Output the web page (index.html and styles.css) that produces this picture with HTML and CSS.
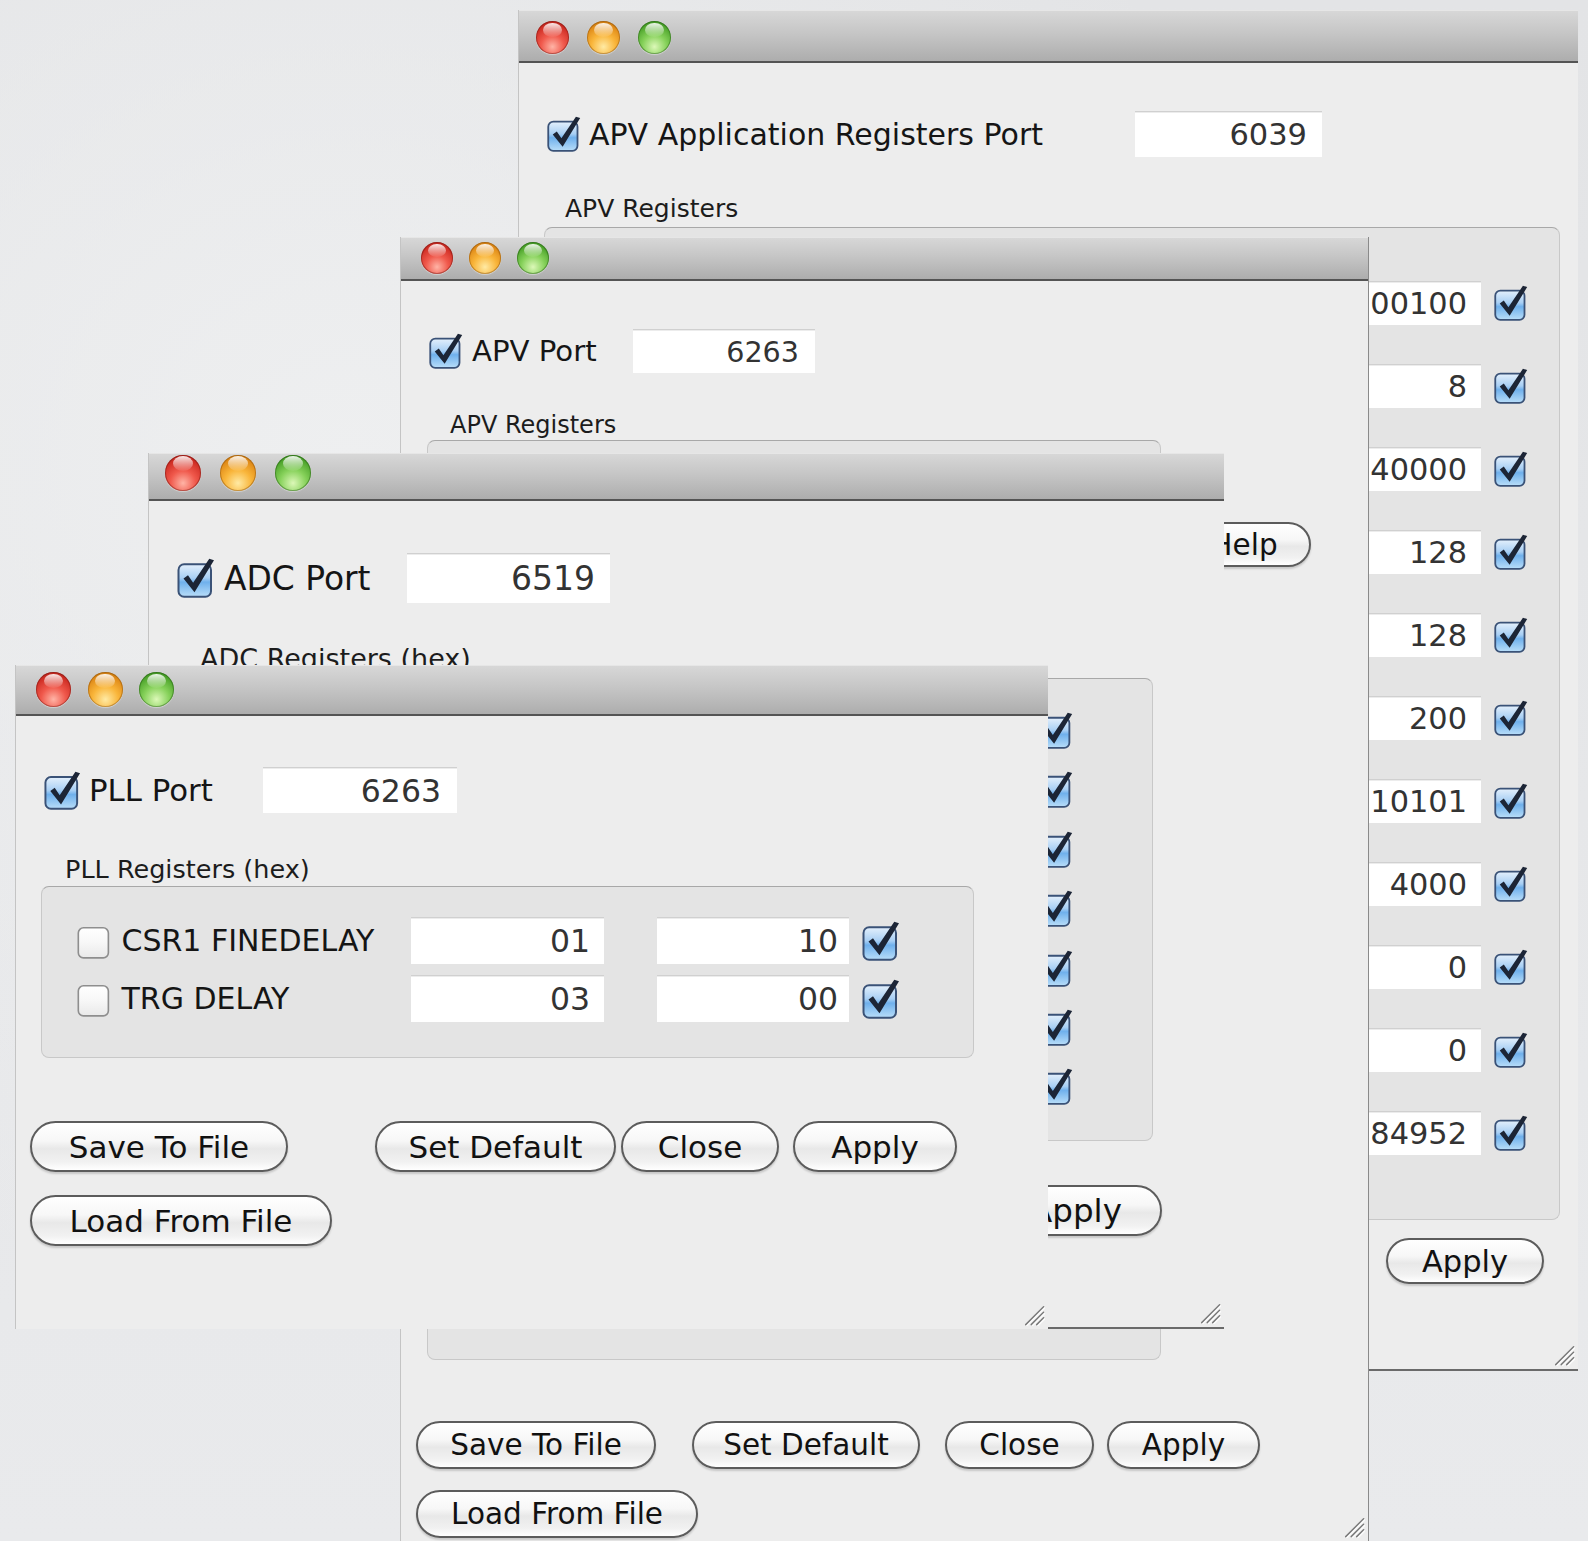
FILE: index.html
```html
<!DOCTYPE html>
<html lang="en">
<head>
<meta charset="utf-8">
<title>APV Slow Control</title>
<link rel="stylesheet" href="styles.css">
</head>
<body>
<svg class="defs" aria-hidden="true">
  <defs>
    <linearGradient id="cbFill" x1="0" y1="0" x2="0" y2="1">
      <stop offset="0" stop-color="#e4f0fc"/>
      <stop offset="0.42" stop-color="#a8cff4"/>
      <stop offset="0.55" stop-color="#6fb0ec"/>
      <stop offset="1" stop-color="#b9def9"/>
    </linearGradient>
    <linearGradient id="cbOff" x1="0" y1="0" x2="0" y2="1">
      <stop offset="0" stop-color="#ffffff"/>
      <stop offset="0.5" stop-color="#f7f7f7"/>
      <stop offset="1" stop-color="#e9e9e9"/>
    </linearGradient>
    <symbol id="cb-on" viewBox="0 0 30 32">
      <rect x="1" y="5" width="26" height="26" rx="4.5" fill="url(#cbFill)" stroke="#3a5277" stroke-width="1.6"/>
      <polygon points="5,16.4 8.6,13.8 12.7,19.8 25.6,0.6 29.4,1.8 13.8,27.4" fill="#1c2536"/>
    </symbol>
    <symbol id="cb-off" viewBox="0 0 30 32">
      <rect x="1" y="5" width="26" height="26" rx="4.5" fill="url(#cbOff)" stroke="#8e8e8e" stroke-width="1.4"/>
    </symbol>
    <symbol id="grip" viewBox="0 0 16 16">
      <g stroke-width="1.1" stroke-linecap="round">
        <path d="M15 2 L2 15 M15 6 L6 15 M15 10 L10 15" stroke="#787878"/>
        <path d="M15.8 2.8 L2.8 15.8 M15.8 6.8 L6.8 15.8 M15.8 10.8 L10.8 15.8" stroke="#ffffff" stroke-opacity="0.8"/>
      </g>
    </symbol>
  </defs>
</svg>

<div class="desk">

  <!-- APV application registers window (back) -->
  <section class="win w-app">
    <header class="titlebar">
      <span class="light red"></span><span class="light amber"></span><span class="light green"></span>
    </header>
    <div class="body">
      <div class="port-row">
        <svg class="cb"><use href="#cb-on"/></svg>
        <span class="port-label">APV Application Registers Port</span>
        <span class="field port-field">6039</span>
      </div>
      <div class="group-label">APV Registers</div>
      <div class="group">
        <div class="reg-row"><span class="field reg-field">00100</span><svg class="cb"><use href="#cb-on"/></svg></div>
        <div class="reg-row"><span class="field reg-field">8</span><svg class="cb"><use href="#cb-on"/></svg></div>
        <div class="reg-row"><span class="field reg-field">40000</span><svg class="cb"><use href="#cb-on"/></svg></div>
        <div class="reg-row"><span class="field reg-field">128</span><svg class="cb"><use href="#cb-on"/></svg></div>
        <div class="reg-row"><span class="field reg-field">128</span><svg class="cb"><use href="#cb-on"/></svg></div>
        <div class="reg-row"><span class="field reg-field">200</span><svg class="cb"><use href="#cb-on"/></svg></div>
        <div class="reg-row"><span class="field reg-field">0010101</span><svg class="cb"><use href="#cb-on"/></svg></div>
        <div class="reg-row"><span class="field reg-field">4000</span><svg class="cb"><use href="#cb-on"/></svg></div>
        <div class="reg-row"><span class="field reg-field">0</span><svg class="cb"><use href="#cb-on"/></svg></div>
        <div class="reg-row"><span class="field reg-field">0</span><svg class="cb"><use href="#cb-on"/></svg></div>
        <div class="reg-row"><span class="field reg-field">84952</span><svg class="cb"><use href="#cb-on"/></svg></div>
      </div>
      <div class="btn-row">
        <button class="btn b-apply">Apply</button>
      </div>
    </div>
    <svg class="grip"><use href="#grip"/></svg>
  </section>

  <!-- APV port window -->
  <section class="win w-apv">
    <header class="titlebar">
      <span class="light red"></span><span class="light amber"></span><span class="light green"></span>
    </header>
    <div class="body">
      <div class="port-row">
        <svg class="cb"><use href="#cb-on"/></svg>
        <span class="port-label">APV Port</span>
        <span class="field port-field">6263</span>
      </div>
      <div class="main">
        <div class="col">
          <div class="group-label">APV Registers</div>
          <div class="group"></div>
        </div>
        <div class="aside">
          <button class="btn b-help">Help</button>
        </div>
      </div>
      <div class="btn-row">
        <button class="btn b-save">Save To File</button>
        <button class="btn b-default">Set Default</button>
        <button class="btn b-close">Close</button>
        <button class="btn b-apply">Apply</button>
      </div>
      <div class="btn-row row-2">
        <button class="btn b-load">Load From File</button>
      </div>
    </div>
    <svg class="grip"><use href="#grip"/></svg>
  </section>

  <!-- ADC port window -->
  <section class="win w-adc">
    <header class="titlebar">
      <span class="light red"></span><span class="light amber"></span><span class="light green"></span>
    </header>
    <div class="body">
      <div class="port-row">
        <svg class="cb"><use href="#cb-on"/></svg>
        <span class="port-label">ADC Port</span>
        <span class="field port-field">6519</span>
      </div>
      <div class="group-label">ADC Registers (hex)</div>
      <div class="group">
        <div class="reg-row"><svg class="cb"><use href="#cb-on"/></svg></div>
        <div class="reg-row"><svg class="cb"><use href="#cb-on"/></svg></div>
        <div class="reg-row"><svg class="cb"><use href="#cb-on"/></svg></div>
        <div class="reg-row"><svg class="cb"><use href="#cb-on"/></svg></div>
        <div class="reg-row"><svg class="cb"><use href="#cb-on"/></svg></div>
        <div class="reg-row"><svg class="cb"><use href="#cb-on"/></svg></div>
        <div class="reg-row"><svg class="cb"><use href="#cb-on"/></svg></div>
      </div>
      <div class="btn-row">
        <button class="btn b-apply">Apply</button>
      </div>
    </div>
    <svg class="grip"><use href="#grip"/></svg>
  </section>

  <!-- PLL port window (front) -->
  <section class="win w-pll">
    <header class="titlebar">
      <span class="light red"></span><span class="light amber"></span><span class="light green"></span>
    </header>
    <div class="body">
      <div class="port-row">
        <svg class="cb"><use href="#cb-on"/></svg>
        <span class="port-label">PLL Port</span>
        <span class="field port-field">6263</span>
      </div>
      <div class="group-label">PLL Registers (hex)</div>
      <div class="group">
        <div class="reg-row">
          <svg class="cb cb-sel"><use href="#cb-off"/></svg>
          <span class="reg-label">CSR1 FINEDELAY</span>
          <span class="field f-addr">01</span>
          <span class="field f-val">10</span>
          <svg class="cb cb-en"><use href="#cb-on"/></svg>
        </div>
        <div class="reg-row">
          <svg class="cb cb-sel"><use href="#cb-off"/></svg>
          <span class="reg-label">TRG DELAY</span>
          <span class="field f-addr">03</span>
          <span class="field f-val">00</span>
          <svg class="cb cb-en"><use href="#cb-on"/></svg>
        </div>
      </div>
      <div class="btn-row">
        <button class="btn b-save">Save To File</button>
        <button class="btn b-default">Set Default</button>
        <button class="btn b-close">Close</button>
        <button class="btn b-apply">Apply</button>
      </div>
      <div class="btn-row row-2">
        <button class="btn b-load">Load From File</button>
      </div>
    </div>
    <svg class="grip"><use href="#grip"/></svg>
  </section>

</div>
</body>
</html>
```

FILE: styles.css
```css
* { box-sizing: border-box; }

html, body { margin: 0; padding: 0; }

body {
  width: 1588px;
  height: 1541px;
  overflow: hidden;
  font-family: "DejaVu Sans", "Noto Sans", sans-serif;
  color: #151515;
  background:
    radial-gradient(ellipse 60% 55% at 22% 30%, #eeeff0 0%, rgba(238,239,240,0) 100%),
    linear-gradient(180deg, #e3e4e6 0%, #e7e8ea 70%, #e9eaec 100%);
}

.defs { position: absolute; width: 0; height: 0; overflow: hidden; }

.desk { position: relative; width: 1588px; height: 1541px; }

/* ---------- generic window chrome ---------- */
.win {
  position: absolute;
  display: flex;
  flex-direction: column;
  background: #ededed;
  border-left: 1px solid #c4c4c4;
  overflow: hidden;
}

.titlebar {
  flex: none;
  display: flex;
  align-items: center;
  background: linear-gradient(180deg, #d8d8d8 0%, #c6c6c6 45%, #adadad 100%);
  border-bottom: 2px solid #545454;
  box-shadow: inset 0 1px 0 #e6e6e6;
}

.light {
  flex: none;
  position: relative;
  border-radius: 50%;
}
.light::after {
  content: "";
  position: absolute;
  left: 22%;
  top: 5%;
  width: 56%;
  height: 42%;
  border-radius: 50%;
  background: linear-gradient(180deg, rgba(255,255,255,0.9), rgba(255,255,255,0.05));
}
.light.red {
  background: radial-gradient(circle at 50% 78%, #ffb4a6 0%, #f0594c 38%, #cf2d24 72%, #a01b14 100%);
  box-shadow: inset 0 0 0 1px rgba(110,20,15,0.45), 0 1px 1px rgba(255,255,255,0.4);
}
.light.amber {
  background: radial-gradient(circle at 50% 78%, #ffeaa4 0%, #f9b53a 40%, #e08b18 72%, #b2680c 100%);
  box-shadow: inset 0 0 0 1px rgba(130,75,10,0.45), 0 1px 1px rgba(255,255,255,0.4);
}
.light.green {
  background: radial-gradient(circle at 50% 78%, #dcf8b8 0%, #86d15a 40%, #4fa62d 72%, #2f7a18 100%);
  box-shadow: inset 0 0 0 1px rgba(30,85,15,0.45), 0 1px 1px rgba(255,255,255,0.4);
}

.body {
  flex: 1;
  min-height: 0;
  display: flex;
  flex-direction: column;
}

.port-row { flex: none; display: flex; align-items: center; }

.cb { flex: none; display: block; overflow: visible; }

.port-label, .reg-label, .group-label { flex: none; white-space: nowrap; }

.field {
  flex: none;
  display: flex;
  align-items: center;
  justify-content: flex-end;
  background: #ffffff;
  border-top: 1px solid #d0d0d0;
  box-shadow: inset 0 1px 0 #ececec;
  color: #333333;
  white-space: nowrap;
  overflow: hidden;
}

.group-label { color: #1c1c1c; }

.group {
  flex: none;
  display: flex;
  flex-direction: column;
  background: #e4e4e4;
  border: 1px solid #c8c8c8;
  border-top-color: #a8a8a8;
  border-radius: 8px;
}

.reg-row { flex: none; display: flex; align-items: center; }

.btn-row { flex: none; display: flex; }

.btn {
  flex: none;
  display: flex;
  align-items: center;
  justify-content: center;
  padding: 0;
  margin: 0;
  font: inherit;
  color: #111111;
  white-space: nowrap;
  border: 2px solid #5c5c5c;
  border-radius: 999px;
  background: linear-gradient(180deg, #ffffff 0%, #f7f7f7 38%, #e8e8e8 55%, #f1f1f1 82%, #ffffff 100%);
  box-shadow: 0 2px 2px rgba(0,0,0,0.16);
}

.grip { position: absolute; right: 3px; bottom: 3px; width: 22px; height: 22px; }

/* ---------- APV application registers window ---------- */
.w-app { left: 518px; top: 10px; width: 1060px; height: 1361px; border-bottom: 2px solid #6a6a6a; }
.w-app .titlebar { height: 53px; padding: 4px 0 0 17px; gap: 18px; }
.w-app .light { width: 33px; height: 33px; }
.w-app .port-row { margin-top: 48px; height: 46px; padding-left: 28px; }
.w-app .port-row .cb { width: 34px; height: 36px; }
.w-app .port-label { margin-left: 8px; width: 546px; font-size: 30px; }
.w-app .port-field { width: 187px; height: 46px; padding-right: 15px; font-size: 30.5px; }
.w-app .group-label { margin-top: 39px; padding-left: 46px; font-size: 25px; line-height: 26px; }
.w-app .group { margin: 5px 0 0 25px; width: 1016px; height: 993px; padding: 53px 31px 0 0; gap: 39px; }
.w-app .reg-row { height: 44px; justify-content: flex-end; }
.w-app .reg-field { width: 360px; height: 44px; padding-right: 14px; font-size: 30.4px; }
.w-app .reg-row .cb { width: 34px; height: 36px; margin-left: 13px; }
.w-app .btn-row { margin-top: 18px; justify-content: flex-end; padding-right: 34px; }
.w-app .btn { height: 46px; font-size: 30.5px; }
.w-app .b-apply { width: 158px; }

/* ---------- APV port window ---------- */
.w-apv { left: 400px; top: 237px; width: 969px; height: 1304px; border-right: 1px solid #8a8a8a; }
.w-apv .titlebar { height: 44px; padding-left: 20px; gap: 16px; }
.w-apv .light { width: 32px; height: 32px; }
.w-apv .port-row { margin-top: 48px; height: 44px; padding-left: 28px; }
.w-apv .port-row .cb { width: 34px; height: 36px; }
.w-apv .port-label { margin-left: 9px; width: 161px; font-size: 29.2px; }
.w-apv .port-field { width: 182px; height: 44px; padding-right: 16px; font-size: 28.6px; }
.w-apv .main { flex: none; display: flex; margin-top: 39px; }
.w-apv .col { flex: none; display: flex; flex-direction: column; }
.w-apv .group-label { padding-left: 49px; font-size: 24px; line-height: 26px; }
.w-apv .group { margin: 2px 0 0 26px; width: 734px; height: 920px; }
.w-apv .aside { flex: none; margin-left: 16px; padding-top: 110px; }
.w-apv .btn { height: 48px; font-size: 29.5px; }
.w-apv .b-help { width: 134px; height: 45px; }
.w-apv .btn-row { margin-top: 61px; padding-left: 15px; }
.w-apv .btn-row.row-2 { margin-top: 21px; }
.w-apv .b-save { width: 240px; }
.w-apv .b-default { margin-left: 36px; width: 228px; }
.w-apv .b-close { margin-left: 25px; width: 149px; }
.w-apv .b-apply { margin-left: 13px; width: 153px; }
.w-apv .b-load { width: 282px; }

/* ---------- ADC port window ---------- */
.w-adc { left: 148px; top: 453px; width: 1076px; height: 876px; border-bottom: 2px solid #6a6a6a; }
.w-adc .titlebar { height: 48px; padding: 0 0 7px 16px; gap: 19px; }
.w-adc .light { width: 36px; height: 36px; }
.w-adc .port-row { margin-top: 52px; height: 50px; padding-left: 28px; }
.w-adc .port-row .cb { width: 38px; height: 40px; }
.w-adc .port-label { margin-left: 9px; width: 183px; font-size: 32.9px; }
.w-adc .port-field { width: 203px; height: 50px; padding-right: 15px; font-size: 33px; }
.w-adc .group-label { margin-top: 42px; padding-left: 51px; font-size: 27px; line-height: 28px; }
.w-adc .group { margin: 5px 0 0 25px; width: 979px; height: 463px; padding: 29px 79px 0 0; gap: 14.4px; }
.w-adc .reg-row { height: 45px; justify-content: flex-end; }
.w-adc .reg-row .cb { width: 35px; height: 37px; }
.w-adc .btn-row { margin-top: 44px; padding-left: 841px; }
.w-adc .btn { height: 51px; font-size: 32.5px; }
.w-adc .b-apply { width: 172px; }

/* ---------- PLL port window ---------- */
.w-pll { left: 15px; top: 665px; width: 1033px; height: 664px; }
.w-pll .titlebar { height: 51px; padding-left: 20px; gap: 16.5px; }
.w-pll .light { width: 35px; height: 35px; }
.w-pll .port-row { margin-top: 51px; height: 46px; padding-left: 28px; }
.w-pll .port-row .cb { width: 37px; height: 39px; }
.w-pll .port-label { margin-left: 8px; width: 174px; font-size: 30.8px; }
.w-pll .port-field { width: 194px; height: 46px; padding-right: 16px; font-size: 31.5px; }
.w-pll .group-label { margin-top: 43px; padding-left: 49px; font-size: 25.5px; line-height: 26px; }
.w-pll .group { margin: 4px 0 0 25px; width: 933px; height: 172px; padding: 30px 0 0 35px; gap: 11px; }
.w-pll .reg-row { height: 47px; }
.w-pll .cb-sel { width: 35px; height: 37px; }
.w-pll .reg-label { margin-left: 9.5px; width: 289.5px; font-size: 30px; }
.w-pll .f-addr, .w-pll .f-val { height: 47px; font-size: 31.5px; }
.w-pll .f-addr { width: 193px; padding-right: 14px; }
.w-pll .f-val { margin-left: 53px; width: 192px; padding-right: 11px; }
.w-pll .cb-en { margin-left: 13px; width: 38px; height: 40px; }
.w-pll .btn-row { margin-top: 63px; padding-left: 14px; }
.w-pll .btn-row.row-2 { margin-top: 23px; }
.w-pll .btn { height: 51px; font-size: 31px; }
.w-pll .b-save { width: 258px; }
.w-pll .b-default { margin-left: 87px; width: 241px; }
.w-pll .b-close { margin-left: 5px; width: 158px; }
.w-pll .b-apply { margin-left: 14px; width: 164px; }
.w-pll .b-load { width: 302px; }
```
